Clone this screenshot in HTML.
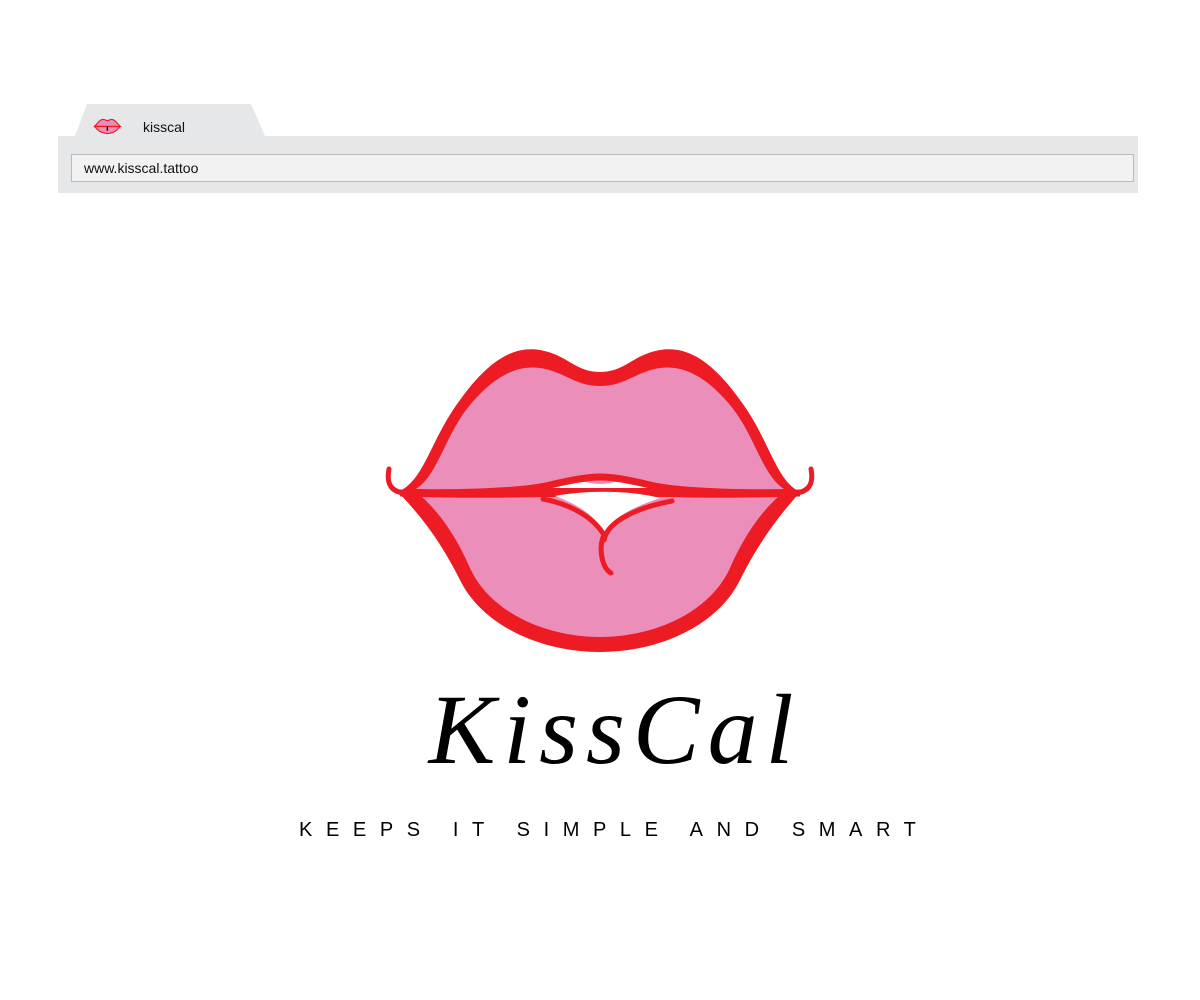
<!DOCTYPE html>
<html><head><style>
body{margin:0;width:1200px;height:1000px;background:#fff;position:relative;overflow:hidden;font-family:"Liberation Sans",sans-serif}
.bar{position:absolute;left:58px;top:136px;width:1080px;height:57px;background:#e6e7e8}
.addr{position:absolute;left:71px;top:154px;background:#f2f2f2;border:1px solid #b9b9b9;font-size:14px;line-height:26px;box-sizing:border-box;padding-left:12px;width:1063px;height:28px;color:#111}
.tabt{position:absolute;left:143px;top:119px;font-size:14px;color:#111}
.k{position:absolute;left:0;width:1200px;top:672px;text-align:center;font-family:"Liberation Serif",serif;font-style:italic;font-size:100px;color:#000;padding-left:30px;box-sizing:border-box;letter-spacing:8px}
.tag{position:absolute;left:299px;top:819px;font-size:20px;letter-spacing:13.6px;color:#000;white-space:nowrap}
</style></head><body>
<svg style="position:absolute;left:0;top:0" width="1200" height="200">
<polygon points="75,136 87,104 251,104 265,136" fill="#e6e7e8"/>
<g transform="translate(94,117) scale(0.065)">
<path d="M4,145 C40,120 70,60 120,40 C160,28 180,55 206,55 C232,55 250,28 290,40 C340,60 370,120 408,145 C370,170 350,240 206,255 C60,240 40,170 4,145Z" fill="#eb8fba" stroke="#ed1c24" stroke-width="18"/>
<path d="M10,145 L400,145" stroke="#ed1c24" stroke-width="22" fill="none"/>
<path d="M206,145 L206,210" stroke="#000" stroke-width="22" fill="none"/>
</g>
</svg>
<div class="bar"></div>
<div class="addr">www.kisscal.tattoo</div>
<div class="tabt">kisscal</div>
<svg style="position:absolute;left:0;top:0" width="1200" height="700">
<path d="M398,492 C425,480 430,440 460,400 C490,358 515,346 540,350 C568,355 575,372 600,372 C625,372 632,355 660,350 C685,346 710,358 740,400 C770,440 775,480 800,492 C740,495 680,490 650,485 C625,479 612,474 600,474 C588,474 575,479 550,485 C520,490 460,495 398,492Z" fill="#ed1c24"/>
<path d="M416,489 C438,475 445,435 470,405 C495,375 518,365 540,368 C565,372 575,386 600,386 C625,386 635,372 660,368 C682,365 705,375 730,405 C755,435 762,475 784,489 C740,490 680,488 650,482 C625,477 612,484 600,484 C588,484 575,477 550,482 C520,488 460,490 416,489Z" fill="#eb8fba"/>
<path d="M398,492 C420,515 440,540 460,580 C482,625 540,652 600,652 C660,652 718,625 740,580 C760,540 780,515 800,492 C740,496 680,493 650,488 L550,488 C520,493 460,496 398,492Z" fill="#ed1c24"/>
<path d="M422,497 C445,518 460,545 470,568 C490,612 545,637 600,637 C655,637 710,612 730,568 C740,545 755,518 778,497 C740,498 700,498 670,497 L545,497 C500,498 460,498 422,497Z" fill="#eb8fba"/>
<path d="M400,493 C460,495 520,492 550,485 C575,479 590,477 600,477 C612,477 625,479 650,485 C680,492 740,495 800,493" fill="none" stroke="#ed1c24" stroke-width="7"/>
<path d="M555,496 C580,505 597,518 604,532 C612,518 635,506 660,498 C630,490 585,490 555,496Z" fill="#ffffff"/>
<g fill="none" stroke="#ed1c24" stroke-width="5" stroke-linecap="round">
<path d="M543,499 C575,505 595,520 604,535 C598,548 602,568 611,573"/>
<path d="M672,501 C640,507 608,520 604,540"/>
<path d="M389,469 C386,485 392,492 405,493"/>
<path d="M811,469 C814,485 808,492 795,493"/>
</g>
</svg>
<div class="k">KissCal</div>
<div class="tag">KEEPS IT SIMPLE AND SMART</div>
</body></html>
